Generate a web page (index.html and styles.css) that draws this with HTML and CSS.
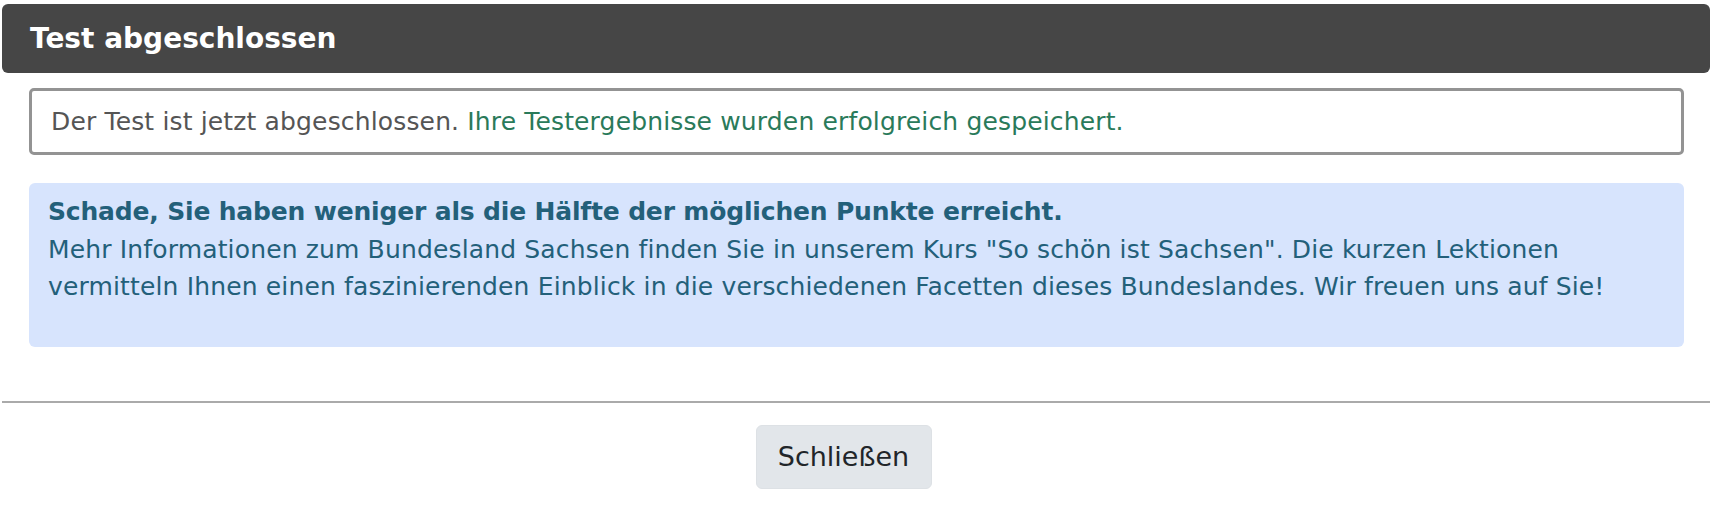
FILE: index.html
```html
<!DOCTYPE html>
<html lang="de">
<head>
<meta charset="utf-8">
<title>Test abgeschlossen</title>
<link rel="stylesheet" href="styles.css">
</head>
<body>
<div class="modal">
  <div class="modal-header">
    <h5 class="modal-title">Test abgeschlossen</h5>
  </div>
  <div class="modal-body">
    <div class="status-box">
      Der Test ist jetzt abgeschlossen. <span class="success">Ihre Testergebnisse wurden erfolgreich gespeichert.</span>
    </div>
    <div class="result-alert">
      <p class="result-text"><strong class="result-title">Schade, Sie haben weniger als die Hälfte der möglichen Punkte erreicht.</strong>Mehr Informationen zum Bundesland Sachsen finden Sie in unserem Kurs "So schön ist Sachsen". Die kurzen Lektionen vermitteln Ihnen einen faszinierenden Einblick in die verschiedenen Facetten dieses Bundeslandes. Wir freuen uns auf Sie!</p>
    </div>
  </div>
  <div class="modal-footer">
    <button class="btn-close-modal" type="button">Schließen</button>
  </div>
</div>
</body>
</html>
```

FILE: styles.css
```css
html, body {
  margin: 0;
  padding: 0;
  background: #ffffff;
}

body {
  font-family: "DejaVu Sans", sans-serif;
  font-size: 25px;
  line-height: 1.5;
  letter-spacing: 0.15px;
  color: #555555;
}

.modal {
  padding: 4px 1px 0 2px;
}

.modal-header {
  background: #464646;
  border-radius: 6px;
  height: 69px;
  display: flex;
  align-items: center;
  padding: 0 28px;
}

.modal-title {
  margin: 0;
  font-size: 28px;
  font-weight: bold;
  letter-spacing: 0;
  color: #ffffff;
  line-height: 1.2;
}

.modal-body {
  padding: 15px 26px 54px 27px;
  display: flex;
  flex-direction: column;
  gap: 28px;
}

.status-box {
  border: 3px solid #939393;
  border-radius: 5px;
  height: 61px;
  box-sizing: content-box;
  display: flex;
  align-items: center;
  padding: 0 19px;
  color: #555555;
}

.success {
  color: #2a7a5a;
  margin-left: 0.32em;
}

.result-alert {
  background: #d7e4fd;
  border-radius: 6px;
  padding: 10px 19px 3px 19px;
  color: #23607a;
}

.result-text {
  margin: 0 0 38px 0;
}

.result-title {
  display: block;
  font-weight: bold;
  letter-spacing: -0.17px;
}

.modal-footer {
  border-top: 2px solid #aaaaaa;
  display: flex;
  justify-content: center;
  padding: 22px 25px 20px 0;
}

.btn-close-modal {
  font-family: "DejaVu Sans", sans-serif;
  font-size: 27px;
  letter-spacing: 0;
  color: #212529;
  background: #e2e6ea;
  border: 1px solid #dde1e5;
  border-radius: 6px;
  width: 176px;
  height: 64px;
  padding: 0;
  cursor: pointer;
}
```
